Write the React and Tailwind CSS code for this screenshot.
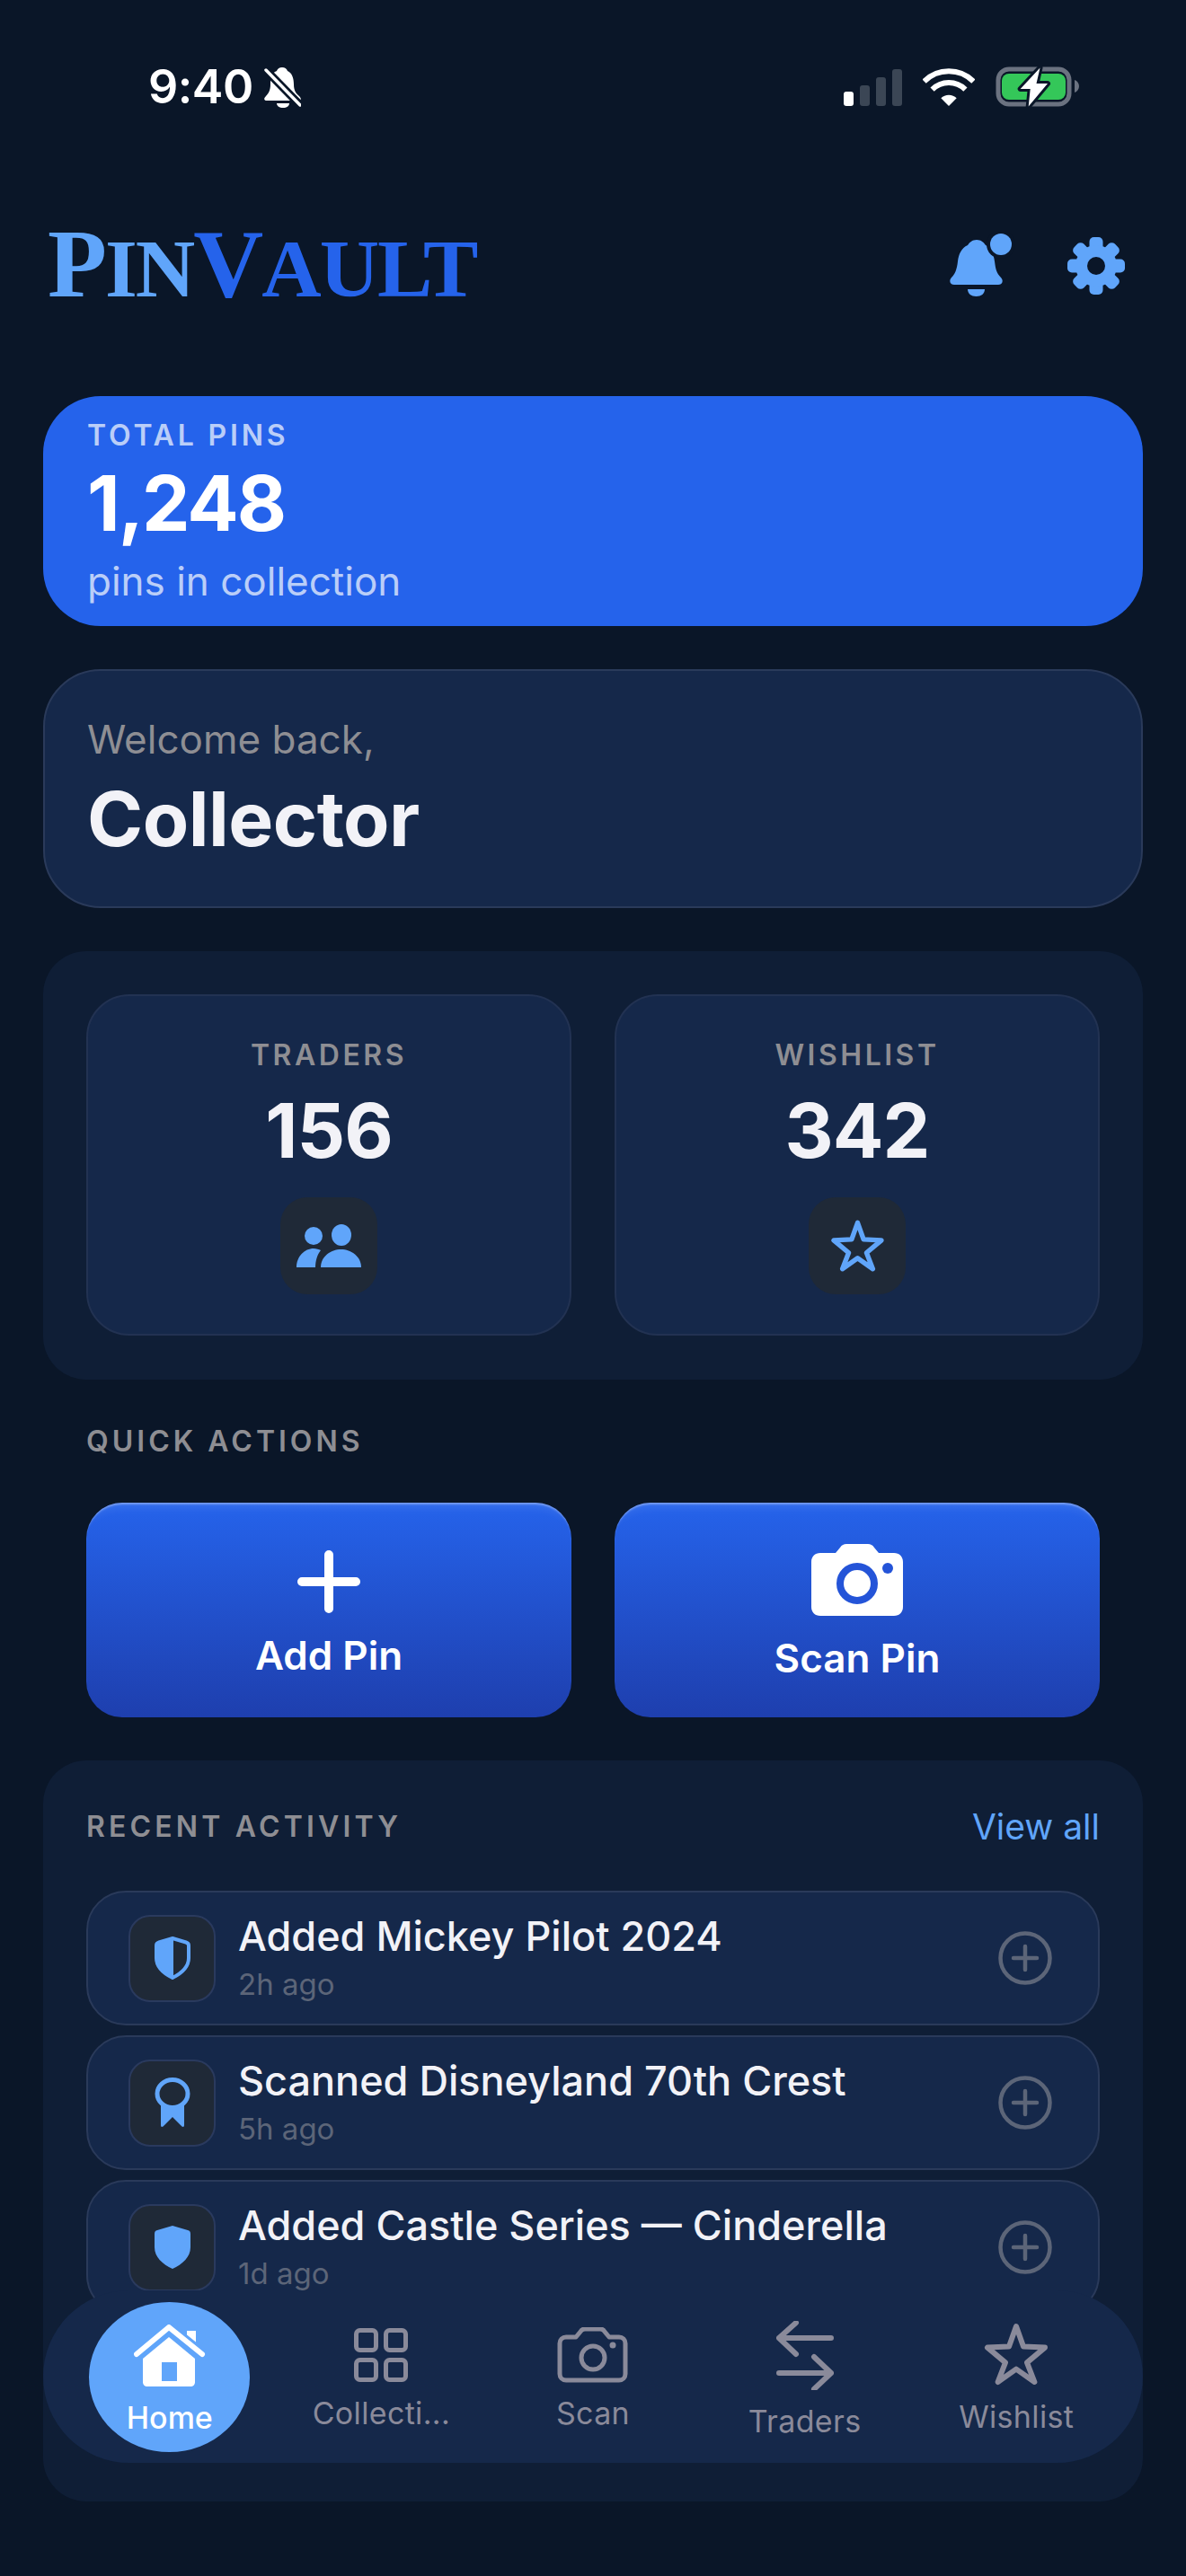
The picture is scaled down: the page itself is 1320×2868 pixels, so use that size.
import React from 'react';

const starPoints = '36,4 44,26.400 68,27.600 48,44.400 56.400,66 36,51.600 15.600,66 24,44.400 4,27.600 28,26.400';

const StatusBar = () => (
  <div className="flex items-center justify-between h-[46px] mt-[74px] pl-[165px] pr-[118px]">
    <div className="flex items-center gap-[12px]">
      <span className="text-[52px] leading-[46px] font-semibold tracking-[-0.5px] text-white">9:40</span>
      <svg width="41" height="45" viewBox="0 0 41 45">
        <path d="M20 0c-3 0-5 1.500-6 4C8 6 7 12 7 19c0 6-2 10-5 13-3 3-2 5 1 5h35c3 0 4-2 1-5-4-3-6-7-6-13 0-7-2-13-7-15-1-2.500-3-4-6-4z" fill="#fff" />
        <path d="M14 40h14c0 3-3 5-7 5s-7-2-7-5z" fill="#fff" />
        <path d="M2 3l38 39" stroke="#0a1628" strokeWidth="9" />
        <path d="M2 3l38 39" stroke="#fff" strokeWidth="3.500" strokeLinecap="round" />
      </svg>
    </div>
    <div className="flex items-center">
      <div className="flex items-end gap-[7px] h-[41px]">
        <div className="w-[11px] h-[16px] rounded-[3px] bg-white" />
        <div className="w-[11px] h-[23px] rounded-[3px] bg-[#3b4655]" />
        <div className="w-[11px] h-[32px] rounded-[3px] bg-[#3b4655]" />
        <div className="w-[11px] h-[41px] rounded-[3px] bg-[#3b4655]" />
      </div>
      <svg className="ml-[23px]" width="58" height="43" viewBox="0 0 58 43">
        <path d="M1.600 14.600A38.700 38.700 0 0 1 56.400 14.600" fill="none" stroke="#fff" strokeWidth="6" />
        <path d="M10.600 23.600A26 26 0 0 1 47.400 23.600" fill="none" stroke="#fff" strokeWidth="6" />
        <path d="M29 42L20.300 33.300A12.300 12.300 0 0 1 37.700 33.300Z" fill="#fff" />
      </svg>
      <svg className="ml-[23px]" width="94" height="46" viewBox="0 0 94 46">
        <rect x="3" y="3" width="79" height="39" rx="12" fill="none" stroke="#6b7280" strokeWidth="5" />
        <rect x="7" y="8" width="71" height="29" rx="8" fill="#34c759" />
        <path d="M88 15c3 1 5 4 5 7s-2 6-5 7z" fill="#6b7280" />
        <path d="M49.500 1.500L27.700 25h11L36.700 44.500 58 19H45.500z" fill="#fff" stroke="#0a1628" strokeWidth="6" strokeLinejoin="round" paintOrder="stroke" />
      </svg>
    </div>
  </div>
);

const BellBadge = () => (
  <svg width="80" height="75" viewBox="0 0 80 75">
    <path d="M36 8c-5 0-8 3-10 6-7 3-10 10-11 18-1 9-3 14-7 18-3 3-2 8 3 8h49c5 0 6-5 3-8-5-5-6-10-7-18-1-8-4-15-10-18-2-3-5-6-10-6z" fill="#60a5fa" />
    <path d="M26 63h19c0 5-4 8-9.500 8S26 68 26 63z" fill="#60a5fa" />
    <circle cx="63" cy="13" r="16" fill="#0a1628" />
    <circle cx="63" cy="13" r="12" fill="#60a5fa" />
  </svg>
);

const Gear = () => (
  <svg width="64" height="64" viewBox="0 0 64 64">
    {[0, 45, 90, 135, 180, 225, 270, 315].map((deg) => (
      <rect key={deg} x="24.500" y="0" width="15" height="20" rx="5" fill="#60a5fa" transform={`rotate(${deg} 32 32)`} />
    ))}
    <circle cx="32" cy="32" r="23" fill="#60a5fa" />
    <circle cx="32" cy="32" r="10" fill="#0a1628" />
  </svg>
);

const Logo = () => (
  <h1 className="font-['Liberation_Serif',serif] font-bold leading-[90px] text-[92px] tracking-[-2px] whitespace-nowrap">
    <span className="text-[#60a5fa]"><span className="text-[108px]">P</span>IN</span>
    <span className="text-[#2563eb]"><span className="text-[108px]">V</span>AULT</span>
  </h1>
);

const People = () => (
  <svg width="72" height="48" viewBox="0 0 72 48" fill="#60a5fa">
    <ellipse cx="19" cy="13" rx="10" ry="10" />
    <ellipse cx="50" cy="12" rx="11" ry="12" />
    <path d="M0 48C0 36 9 27 19 27c3 0 6 1 8 2-4 5-6 12-6 19z" />
    <path d="M27 48c0-12 11-20 22.500-20S72 36 72 48z" />
  </svg>
);

const StarOutline = ({ w, h, color, sw = 6 }) => (
  <svg width={w} height={h} viewBox="0 0 72 70">
    <polygon points={starPoints} fill="none" stroke={color} strokeWidth={sw} strokeLinejoin="round" />
  </svg>
);

const Plus = () => (
  <svg width="70" height="70" viewBox="0 0 70 70">
    <path d="M35 5v60M5 35h60" stroke="#fff" strokeWidth="10" strokeLinecap="round" />
  </svg>
);

const CameraFill = () => (
  <svg width="102" height="80" viewBox="0 0 102 80">
    <path d="M10 10h17l5-6c2-3 4-4 7-4h24c3 0 5 1 7 4l5 6h17c6 0 10 4 10 10v50c0 6-4 10-10 10H10C4 80 0 76 0 70V20c0-6 4-10 10-10z" fill="#fff" />
    <circle cx="51" cy="44" r="19" fill="none" stroke="#2454d8" strokeWidth="8" />
    <circle cx="85" cy="27" r="6" fill="#2454d8" />
  </svg>
);

const ShieldHalf = () => (
  <svg width="40" height="48" viewBox="0 0 40 48">
    <path d="M20 2l15 4.500c1.500.500 3 1.500 3 3.500v14c0 10-8 17-18 22C10 41 2 34 2 24V10c0-2 1.500-3 3-3.500z" fill="none" stroke="#60a5fa" strokeWidth="4" />
    <path d="M20 2v44C10 41 2 34 2 24V10c0-2 1.500-3 3-3.500z" fill="#60a5fa" stroke="#60a5fa" strokeWidth="2" />
  </svg>
);

const Ribbon = () => (
  <svg width="40" height="56" viewBox="0 0 40 56">
    <path d="M7 28v25c0 2 1 2.500 2.500 1.500L20 44l10.500 10.500c1.500 1 2.500.500 2.500-1.500V28z" fill="#60a5fa" />
    <ellipse cx="20" cy="18" rx="17" ry="15.500" fill="#1f2937" stroke="#60a5fa" strokeWidth="5" />
  </svg>
);

const ShieldFill = () => (
  <svg width="40" height="48" viewBox="0 0 40 48">
    <path d="M20 0l17 5c2 .500 3 1.500 3 4v15c0 11-9 19-20 24C9 43 0 35 0 24V9c0-2.500 1-3.500 3-4z" fill="#60a5fa" />
  </svg>
);

const PlusCircle = () => (
  <svg width="60" height="60" viewBox="0 0 60 60" fill="none" stroke="#5c6578" strokeWidth="4.500" strokeLinecap="round">
    <circle cx="30" cy="30" r="27.500" />
    <path d="M30 17v26M17 30h26" />
  </svg>
);

const activity = [
  { title: 'Added Mickey Pilot 2024', time: '2h ago', icon: <ShieldHalf /> },
  { title: 'Scanned Disneyland 70th Crest', time: '5h ago', icon: <Ribbon /> },
  { title: 'Added Castle Series — Cinderella', time: '1d ago', icon: <ShieldFill /> },
];

const StatCard = ({ label, value, children }) => (
  <div className="flex flex-col items-center h-[380px] rounded-[48px] border-2 border-[#223252] bg-[#15284a] pt-[46px]">
    <span className="text-[32px] leading-[40px] font-semibold tracking-[0.11em] text-[#8e8e93]">{label}</span>
    <span className="mt-[14px] text-[84px] leading-[100px] font-bold tracking-[-1px] text-[#f2f2f7]">{value}</span>
    <div className="mt-[24px] flex items-center justify-center w-[108px] h-[108px] rounded-[30px] bg-[#1f2937]">{children}</div>
  </div>
);

const ActionButton = ({ label, icon, labelClass }) => (
  <div className="flex flex-col items-center h-[239px] rounded-[40px] bg-gradient-to-b from-[#2563eb] to-[#1e3fae] shadow-[inset_0_3px_2px_-1px_rgba(255,255,255,0.3),inset_0_24px_12px_-20px_rgba(255,255,255,0.12)]">
    {icon}
    <span className={`text-[44px] leading-[56px] font-semibold text-white ${labelClass}`}>{label}</span>
  </div>
);

const NavItem = ({ label, icon, labelClass }) => (
  <div className="flex flex-col items-center">
    {icon}
    <span className={`text-[34px] leading-[42px] tracking-[0.01em] text-[#8a8a9a] ${labelClass}`}>{label}</span>
  </div>
);

const BottomNav = () => (
  <div className="absolute left-[48px] right-[48px] top-[2550px] h-[192px] rounded-[96px] bg-[#15284a] grid grid-cols-5 px-[23px]">
    <div className="flex justify-center items-start pt-[13px]">
      <div className="flex flex-col items-center w-[179px] h-[167px] rounded-[50%] bg-[#60a5fa] pt-[25px]">
        <svg width="80" height="70" viewBox="0 0 80 70">
          <path d="M59 7h10v16H59z" fill="#fff" />
          <path d="M39 14L68 38v26c0 3-2 5-5 5H15c-3 0-5-2-5-5V38z" fill="#fff" />
          <path d="M3 33L39 3l37 30" fill="none" stroke="#60a5fa" strokeWidth="12" />
          <path d="M3 33L39 3l37 30" fill="none" stroke="#fff" strokeWidth="6" strokeLinecap="round" strokeLinejoin="round" />
          <rect x="31" y="42" width="17" height="21" fill="#60a5fa" />
        </svg>
        <span className="mt-[13px] text-[34px] leading-[42px] font-medium text-white">Home</span>
      </div>
    </div>
    <div className="pt-[42px]">
      <NavItem
        label="Collecti..."
        labelClass="mt-[14px]"
        icon={
          <svg width="60" height="60" viewBox="0 0 60 60" fill="none" stroke="#8a8a9a" strokeWidth="5">
            <rect x="2.500" y="2.500" width="22" height="22" rx="4" />
            <rect x="35.500" y="2.500" width="22" height="22" rx="4" />
            <rect x="2.500" y="35.500" width="22" height="22" rx="4" />
            <rect x="35.500" y="35.500" width="22" height="22" rx="4" />
          </svg>
        }
      />
    </div>
    <div className="pt-[41px]">
      <NavItem
        label="Scan"
        labelClass="mt-[13px]"
        icon={
          <svg width="79" height="62" viewBox="0 0 79 62" fill="none" stroke="#8a8a9a" strokeWidth="5" strokeLinejoin="round">
            <path d="M10 11h11l5-6c1-2 3-3 5-3h17c2 0 4 1 5 3l5 6h11c4 0 7 3 7 7v34c0 4-3 7-7 7H10c-4 0-7-3-7-7V18c0-4 3-7 7-7z" />
            <circle cx="40" cy="34" r="13" />
            <circle cx="62" cy="20" r="3.500" fill="#8a8a9a" stroke="none" />
          </svg>
        }
      />
    </div>
    <div className="pt-[34px]">
      <NavItem
        label="Traders"
        labelClass="mt-[14px]"
        icon={
          <svg width="64" height="77" viewBox="0 0 64 77" fill="none" stroke="#8a8a9a" strokeWidth="6" strokeLinecap="round" strokeLinejoin="round">
            <path d="M61 19H3M22 2L3 19l19 18" />
            <path d="M3 58h58M42 40l19 18-19 18" />
          </svg>
        }
      />
    </div>
    <div className="pt-[36px]">
      <NavItem label="Wishlist" labelClass="mt-[14px]" icon={<StarOutline w={72} h={70} color="#8a8a9a" />} />
    </div>
  </div>
);

export default function App() {
  return (
    <div className="relative w-[1320px] h-[2868px] overflow-hidden bg-[#0a1628] font-['Inter',sans-serif]">
      <StatusBar />

      <header className="flex items-center justify-between h-[90px] mt-[131px] pl-[53px] pr-[68px]">
        <Logo />
        <div className="flex items-center gap-[57px]">
          <BellBadge />
          <Gear />
        </div>
      </header>

      <main className="flex flex-col mt-[100px] px-[48px]">
        <section className="h-[256px] rounded-[64px] bg-[#2563eb] px-[49px] pt-[24px]">
          <p className="text-[32px] leading-[40px] font-semibold tracking-[0.12em] text-white/70">TOTAL PINS</p>
          <p className="text-[85px] leading-[112px] font-bold tracking-[-2px] text-white">1,248</p>
          <p className="mt-[4px] text-[44px] leading-[52px] text-white/70">pins in collection</p>
        </section>

        <section className="mt-[48px] h-[266px] rounded-[64px] border-2 border-[#2a3a5a] bg-[#15284a] px-[47px] pt-[48px]">
          <p className="text-[44px] leading-[56px] text-[#8e8e93]">Welcome back,</p>
          <p className="mt-[11px] text-[84px] leading-[100px] font-bold tracking-[-0.5px] text-[#f2f2f7]">Collector</p>
        </section>

        <section className="mt-[48px] h-[477px] rounded-[48px] bg-[#0f1e36] p-[48px] grid grid-cols-2 gap-[48px]">
          <StatCard label="TRADERS" value="156"><People /></StatCard>
          <StatCard label="WISHLIST" value="342"><StarOutline w={61} h={58} color="#60a5fa" sw={6.500} /></StatCard>
        </section>

        <p className="mt-[49px] px-[48px] text-[32px] leading-[40px] font-semibold tracking-[0.125em] text-[#8e8e93]">QUICK ACTIONS</p>

        <section className="mt-[48px] px-[48px] grid grid-cols-2 gap-[48px]">
          <ActionButton label="Add Pin" labelClass="mt-[19px]" icon={<div className="mt-[53px]"><Plus /></div>} />
          <ActionButton label="Scan Pin" labelClass="mt-[19px]" icon={<div className="mt-[46px]"><CameraFill /></div>} />
        </section>

        <section className="mt-[48px] h-[825px] rounded-[48px] bg-[#0f1e36] px-[48px] pt-[50px]">
          <div className="flex items-center justify-between h-[48px]">
            <span className="text-[32px] leading-[40px] font-semibold tracking-[0.13em] text-[#8e8e93]">RECENT ACTIVITY</span>
            <span className="text-[39px] leading-[48px] text-[#60a5fa]">View all</span>
          </div>
          <div className="mt-[47px] flex flex-col gap-[11px]">
            {activity.map((item) => (
              <div key={item.title} className="flex items-center h-[150px] rounded-[44px] border-2 border-[#2a3a5a] bg-[#15284a] pl-[45px] pr-[51px]">
                <div className="flex items-center justify-center w-[97px] h-[97px] rounded-[24px] border-2 border-[#2a3a5e] bg-[#1f2937]">{item.icon}</div>
                <div className="flex-1 ml-[25px]">
                  <p className="text-[45px] leading-[54px] font-medium text-[#f2f2f7]">{item.title}</p>
                  <p className="mt-[4px] text-[33px] leading-[44px] text-[#5c6578]">{item.time}</p>
                </div>
                <PlusCircle />
              </div>
            ))}
          </div>
        </section>
      </main>

      <BottomNav />
    </div>
  );
}
